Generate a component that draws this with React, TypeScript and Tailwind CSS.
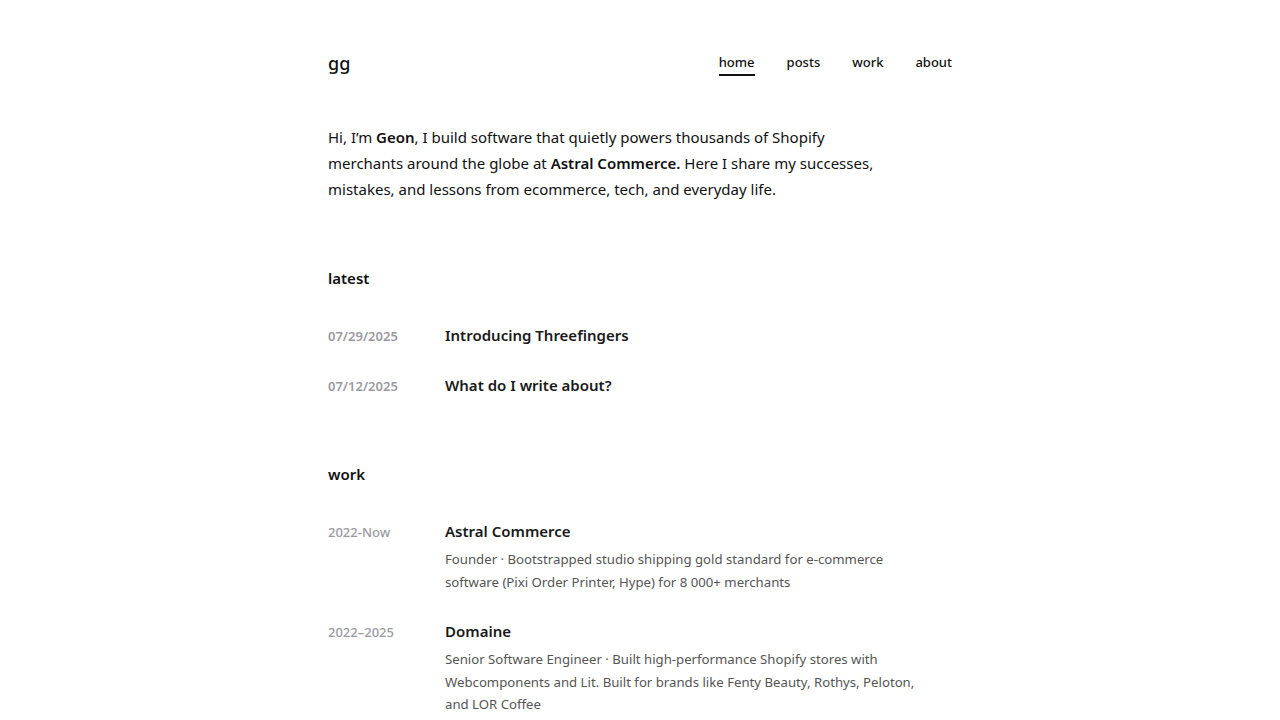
const posts = [
  { date: "07/29/2025", title: "Introducing Threefingers" },
  { date: "07/12/2025", title: "What do I write about?" },
];

const jobs = [
  {
    period: "2022-Now",
    company: "Astral Commerce",
    desc: "Founder · Bootstrapped studio shipping gold standard for e-commerce software (Pixi Order Printer, Hype) for 8 000+ merchants",
  },
  {
    period: "2022–2025",
    company: "Domaine",
    desc: "Senior Software Engineer · Built high-performance Shopify stores with Webcomponents and Lit. Built for brands like Fenty Beauty, Rothys, Peloton, and LOR Coffee",
  },
];

const nav = ["home", "posts", "work", "about"];

export default function App() {
  return (
    <div className="min-h-screen bg-white text-[#111] font-['Noto_Sans',sans-serif]">
      <div className="mx-auto w-[624px] pt-[51px]">
        <header className="flex items-start justify-between">
          <a className="text-[18px] font-medium leading-6">gg</a>
          <nav className="flex gap-8 pt-[1px] text-[13px] font-medium leading-5">
            {nav.map((item, i) => (
              <a
                key={item}
                className={`pb-[2px] border-b-2 ${i === 0 ? "border-[#111]" : "border-transparent"}`}
              >
                {item}
              </a>
            ))}
          </nav>
        </header>

        <p className="mt-[48px] max-w-[556px] text-[15px] leading-[26px]">
          Hi, I’m <strong className="font-semibold">Geon</strong>, I build software that quietly powers thousands of Shopify
          merchants around the globe at <strong className="font-semibold">Astral Commerce.</strong> Here I share my successes,
          mistakes, and lessons from ecommerce, tech, and everyday life.
        </p>

        <section className="mt-[64px]">
          <h2 className="text-[15px] font-semibold leading-6">latest</h2>
          <div className="mt-[33px] flex flex-col gap-[26px]">
            {posts.map((p) => (
              <div key={p.date} className="flex items-baseline">
                <span className="w-[117px] shrink-0 text-[13px] font-semibold text-[#9a9a9f]">{p.date}</span>
                <span className="text-[15px] font-semibold leading-6 text-[#1a1a1a]">{p.title}</span>
              </div>
            ))}
          </div>
        </section>

        <section className="mt-[65px]">
          <h2 className="text-[15px] font-semibold leading-6">work</h2>
          <div className="mt-[33px] flex flex-col gap-[26px]">
            {jobs.map((j) => (
              <div key={j.period} className="flex items-baseline">
                <span className="w-[117px] shrink-0 text-[13px] font-medium text-[#9a9a9f]">{j.period}</span>
                <div>
                  <div className="text-[15px] font-semibold leading-6 text-[#1a1a1a]">{j.company}</div>
                  <p className="mt-[5px] max-w-[480px] text-[13.2px] leading-[22.5px] text-[#555]">{j.desc}</p>
                </div>
              </div>
            ))}
          </div>
        </section>
      </div>
    </div>
  );
}
